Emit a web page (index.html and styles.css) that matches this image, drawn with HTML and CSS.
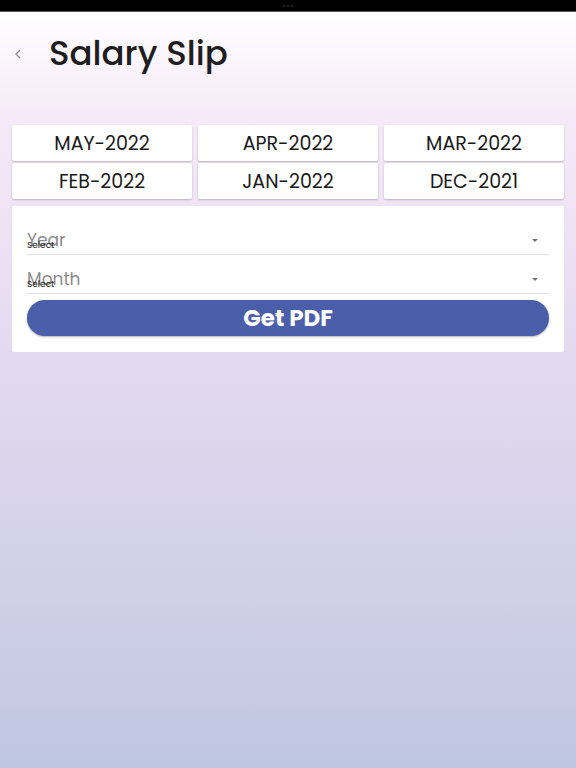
FILE: index.html
```html
<!DOCTYPE html>
<html lang="en">
<head>
    <meta charset="UTF-8">
    <meta name="viewport" content="width=device-width, initial-scale=1.0">
    <title>Salary Slip</title>
    <link rel="stylesheet" href="styles.css">
</head>
<body>
    <div class="status-bar">
        <span class="dots"><i></i><i></i><i></i></span>
    </div>

    <div class="screen">
        <header class="top-bar">
            <button class="back-button" aria-label="Back">
                <svg width="8" height="10" viewBox="0 0 8 10">
                    <path d="M6 1 L2 5 L6 9" fill="none" stroke="#8a8a8a" stroke-width="1.3"/>
                </svg>
            </button>
            <h1>Salary Slip</h1>
        </header>

        <div class="month-grid">
            <button class="month-item">MAY-2022</button>
            <button class="month-item">APR-2022</button>
            <button class="month-item">MAR-2022</button>
            <button class="month-item">FEB-2022</button>
            <button class="month-item">JAN-2022</button>
            <button class="month-item">DEC-2021</button>
        </div>

        <form class="slip-form">
            <div class="select-field">
                <span class="field-label">Year</span>
                <span class="field-hint">Select</span>
                <span class="field-arrow"></span>
            </div>
            <div class="select-field">
                <span class="field-label">Month</span>
                <span class="field-hint">Select</span>
                <span class="field-arrow"></span>
            </div>
            <button type="button" class="pdf-button">Get PDF</button>
        </form>
    </div>
</body>
</html>
```

FILE: styles.css
```css
* {
    margin: 0;
    padding: 0;
    box-sizing: border-box;
    font-family: 'Poppins', 'Open Sans', sans-serif;
}

html, body {
    height: 100%;
}

body {
    background: #000;
    display: flex;
    flex-direction: column;
}

.status-bar {
    height: 12px;
    background: #000;
    border-bottom: 1px solid #5a5a5a;
    display: flex;
    justify-content: center;
    align-items: center;
}

.dots {
    display: flex;
    gap: 2px;
}

.dots i {
    width: 2px;
    height: 2px;
    border-radius: 50%;
    background: #2e2e2e;
}

.screen {
    flex: 1;
    background: linear-gradient(180deg, #ffffff 0%, #f6e9f8 14%, #e4daf0 45%, #cfcfe7 78%, #bfc6e0 100%);
    padding: 0 12px;
}

.top-bar {
    height: 80px;
    display: flex;
    align-items: center;
    padding-top: 2px;
}

.back-button {
    width: 37px;
    background: none;
    border: none;
    display: flex;
    padding-left: 2px;
    padding-top: 1px;
    cursor: pointer;
}

.top-bar h1 {
    font-size: 34px;
    font-weight: 500;
    color: #1e1e1e;
}

.month-grid {
    margin-top: 33px;
    display: grid;
    grid-template-columns: repeat(3, 1fr);
    column-gap: 6px;
    row-gap: 2px;
}

.month-item {
    height: 36px;
    background: #fff;
    border: none;
    border-radius: 2px;
    box-shadow: 0 1px 2px rgba(0, 0, 0, 0.22);
    font-size: 19px;
    color: #1a1a1a;
    cursor: pointer;
}

.slip-form {
    margin-top: 7px;
    background: #fff;
    border-radius: 2px;
    padding: 16px 15px 16px;
}

.select-field {
    position: relative;
    height: 33px;
    border-bottom: 1px solid #e0e0e0;
}

.select-field + .select-field {
    height: 39px;
}

.field-label {
    position: absolute;
    left: 0;
    bottom: 1px;
    font-size: 17px;
    color: #8c8c8c;
}

.field-hint {
    position: absolute;
    left: 0;
    bottom: 2px;
    font-size: 9px;
    color: #111;
}

.field-arrow {
    position: absolute;
    right: 11px;
    bottom: 12px;
    border-left: 3px solid transparent;
    border-right: 3px solid transparent;
    border-top: 3px solid #777;
}

.pdf-button {
    margin-top: 6px;
    width: 100%;
    height: 36px;
    border: none;
    border-radius: 18px;
    background: #4a5eaa;
    box-shadow: 0 1px 2px rgba(0, 0, 0, 0.3);
    color: #fff;
    font-size: 23px;
    font-weight: 700;
    cursor: pointer;
}
```
